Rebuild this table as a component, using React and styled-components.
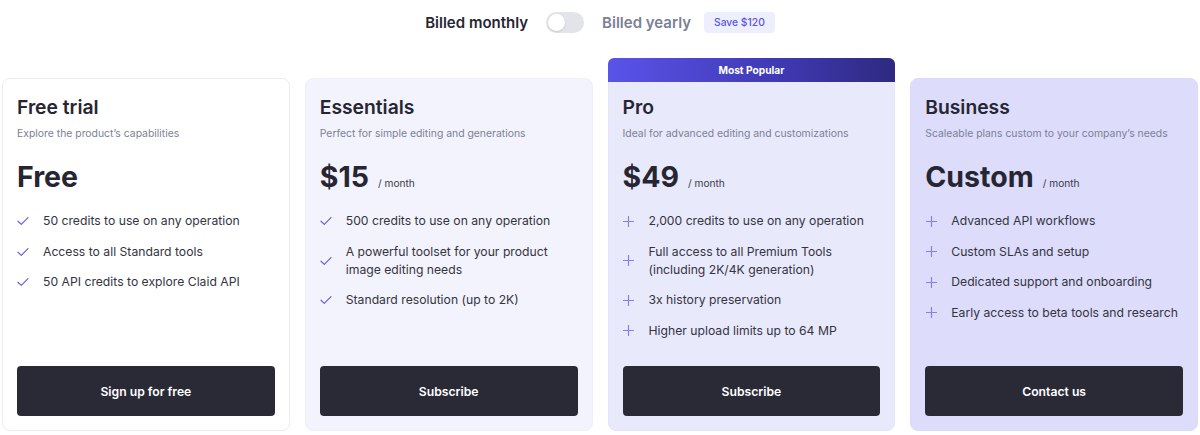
import React from "react";
import styled, { createGlobalStyle } from "styled-components";

const Global = createGlobalStyle`
  html, body { margin: 0; padding: 0; background: #ffffff; }
  body { font-family: Inter, "Noto Sans", sans-serif; color: #262633; -webkit-font-smoothing: antialiased; }
`;

const Page = styled.div`
  width: 1200px;
  height: 435px;
  box-sizing: border-box;
  padding: 0 2px 0 2px;
  display: flex;
  flex-direction: column;
`;

const BillingRow = styled.div`
  height: 44px;
  display: flex;
  align-items: center;
  justify-content: center;
`;

const BillLabel = styled.span`
  font-size: 15px;
  font-weight: 600;
  color: ${(p) => (p.$active ? "#262633" : "#7b7f96")};
`;

const Toggle = styled.div`
  width: 38px;
  height: 21px;
  border-radius: 11px;
  background: #e3e4e9;
  margin: 0 18px;
  position: relative;
  &::after {
    content: "";
    position: absolute;
    left: 2px;
    top: 2px;
    width: 17px;
    height: 17px;
    border-radius: 50%;
    background: #ffffff;
    box-shadow: 0 1px 2px rgba(0, 0, 0, 0.12);
  }
`;

const SaveTag = styled.span`
  margin-left: 13px;
  height: 21px;
  padding: 0 10px;
  display: inline-flex;
  align-items: center;
  font-size: 10.3px;
  font-weight: 500;
  color: #5b54e0;
  background: #eeeffd;
  border-radius: 4px;
`;

const Cards = styled.div`
  margin-top: 34px;
  display: grid;
  grid-template-columns: repeat(4, 1fr);
  gap: 15px;
`;

const Card = styled.div`
  position: relative;
  height: 353px;
  box-sizing: border-box;
  padding: 16px 14px 14px;
  border-radius: 8px;
  background: ${(p) => p.$bg};
  border: 1px solid ${(p) => p.$border};
  display: flex;
  flex-direction: column;
  ${(p) => p.$badged && `border-top-left-radius: 0; border-top-right-radius: 0;`}
`;

const Badge = styled.div`
  position: absolute;
  left: -1px;
  right: -1px;
  top: -21px;
  height: 24px;
  border-radius: 6px 6px 0 0;
  background: linear-gradient(90deg, #5a53ea 0%, #413bb8 55%, #2e2a80 100%);
  color: #ffffff;
  font-size: 10.2px;
  font-weight: 700;
  display: flex;
  align-items: center;
  justify-content: center;
`;

const Title = styled.h2`
  margin: 0;
  font-size: 19.3px;
  line-height: 24px;
  font-weight: 600;
  color: #262633;
`;

const Subtitle = styled.p`
  margin: 8px 0 0;
  font-size: 10.4px;
  line-height: 14px;
  color: #7b7f96;
`;

const PriceRow = styled.div`
  margin-top: 19px;
  display: flex;
  align-items: baseline;
  gap: 9px;
`;

const Price = styled.span`
  font-size: 28.5px;
  line-height: 34px;
  font-weight: 700;
  color: #262633;
`;

const Period = styled.span`
  font-size: 10.2px;
  color: #3a3a48;
`;

const Features = styled.ul`
  list-style: none;
  margin: 18px 0 0;
  padding: 0;
  display: flex;
  flex-direction: column;
  gap: 12.6px;
  flex: 1;
`;

const Feature = styled.li`
  display: flex;
  align-items: center;
  gap: 14px;
  font-size: 12.2px;
  line-height: 18px;
  color: #34343f;
`;

const IconBox = styled.span`
  width: 12px;
  flex: 0 0 12px;
  display: flex;
  align-items: center;
  justify-content: center;
`;

const Button = styled.button`
  height: 50px;
  width: 100%;
  border: none;
  border-radius: 4px;
  background: #2a2a37;
  color: #ffffff;
  font-family: inherit;
  font-size: 12.2px;
  font-weight: 600;
  cursor: pointer;
`;

const Check = () => (
  <svg width="12" height="10" viewBox="0 0 12 10" fill="none">
    <path d="M1 5.2 L4.3 8.4 L11 1.6" stroke="#6c5ee0" strokeWidth="1.2" strokeLinecap="round" strokeLinejoin="round" />
  </svg>
);

const Plus = () => (
  <svg width="11" height="11" viewBox="0 0 11 11" fill="none">
    <path d="M5.5 0.5 V10.5 M0.5 5.5 H10.5" stroke="#8a80ea" strokeWidth="1.2" strokeLinecap="round" />
  </svg>
);

const plans = [
  {
    title: "Free trial",
    subtitle: "Explore the product’s capabilities",
    price: "Free",
    period: null,
    icon: "check",
    bg: "#ffffff",
    border: "#ececf1",
    features: [
      "50 credits to use on any operation",
      "Access to all Standard tools",
      "50 API credits to explore Claid API",
    ],
    cta: "Sign up for free",
  },
  {
    title: "Essentials",
    subtitle: "Perfect for simple editing and generations",
    price: "$15",
    period: "/ month",
    icon: "check",
    bg: "#f3f3fd",
    border: "#efeffb",
    features: [
      "500 credits to use on any operation",
      "A powerful toolset for your product image editing needs",
      "Standard resolution (up to 2K)",
    ],
    cta: "Subscribe",
  },
  {
    title: "Pro",
    subtitle: "Ideal for advanced editing and customizations",
    price: "$49",
    period: "/ month",
    icon: "plus",
    bg: "#e9e9fc",
    border: "#e4e4fa",
    badge: "Most Popular",
    features: [
      "2,000 credits to use on any operation",
      "Full access to all Premium Tools (including 2K/4K generation)",
      "3x history preservation",
      "Higher upload limits up to 64 MP",
    ],
    cta: "Subscribe",
  },
  {
    title: "Business",
    subtitle: "Scaleable plans custom to your company’s needs",
    price: "Custom",
    period: "/ month",
    icon: "plus",
    bg: "#dddcfb",
    border: "#dad9fa",
    features: [
      "Advanced API workflows",
      "Custom SLAs and setup",
      "Dedicated support and onboarding",
      "Early access to beta tools and research",
    ],
    cta: "Contact us",
  },
];

export default function App() {
  return (
    <>
      <Global />
      <Page>
        <BillingRow>
          <BillLabel $active>Billed monthly</BillLabel>
          <Toggle />
          <BillLabel>Billed yearly</BillLabel>
          <SaveTag>Save $120</SaveTag>
        </BillingRow>
        <Cards>
          {plans.map((p) => (
            <Card key={p.title} $bg={p.bg} $border={p.border} $badged={!!p.badge}>
              {p.badge && <Badge>{p.badge}</Badge>}
              <Title>{p.title}</Title>
              <Subtitle>{p.subtitle}</Subtitle>
              <PriceRow>
                <Price>{p.price}</Price>
                {p.period && <Period>{p.period}</Period>}
              </PriceRow>
              <Features>
                {p.features.map((f) => (
                  <Feature key={f}>
                    <IconBox>{p.icon === "check" ? <Check /> : <Plus />}</IconBox>
                    <span>{f}</span>
                  </Feature>
                ))}
              </Features>
              <Button>{p.cta}</Button>
            </Card>
          ))}
        </Cards>
      </Page>
    </>
  );
}
